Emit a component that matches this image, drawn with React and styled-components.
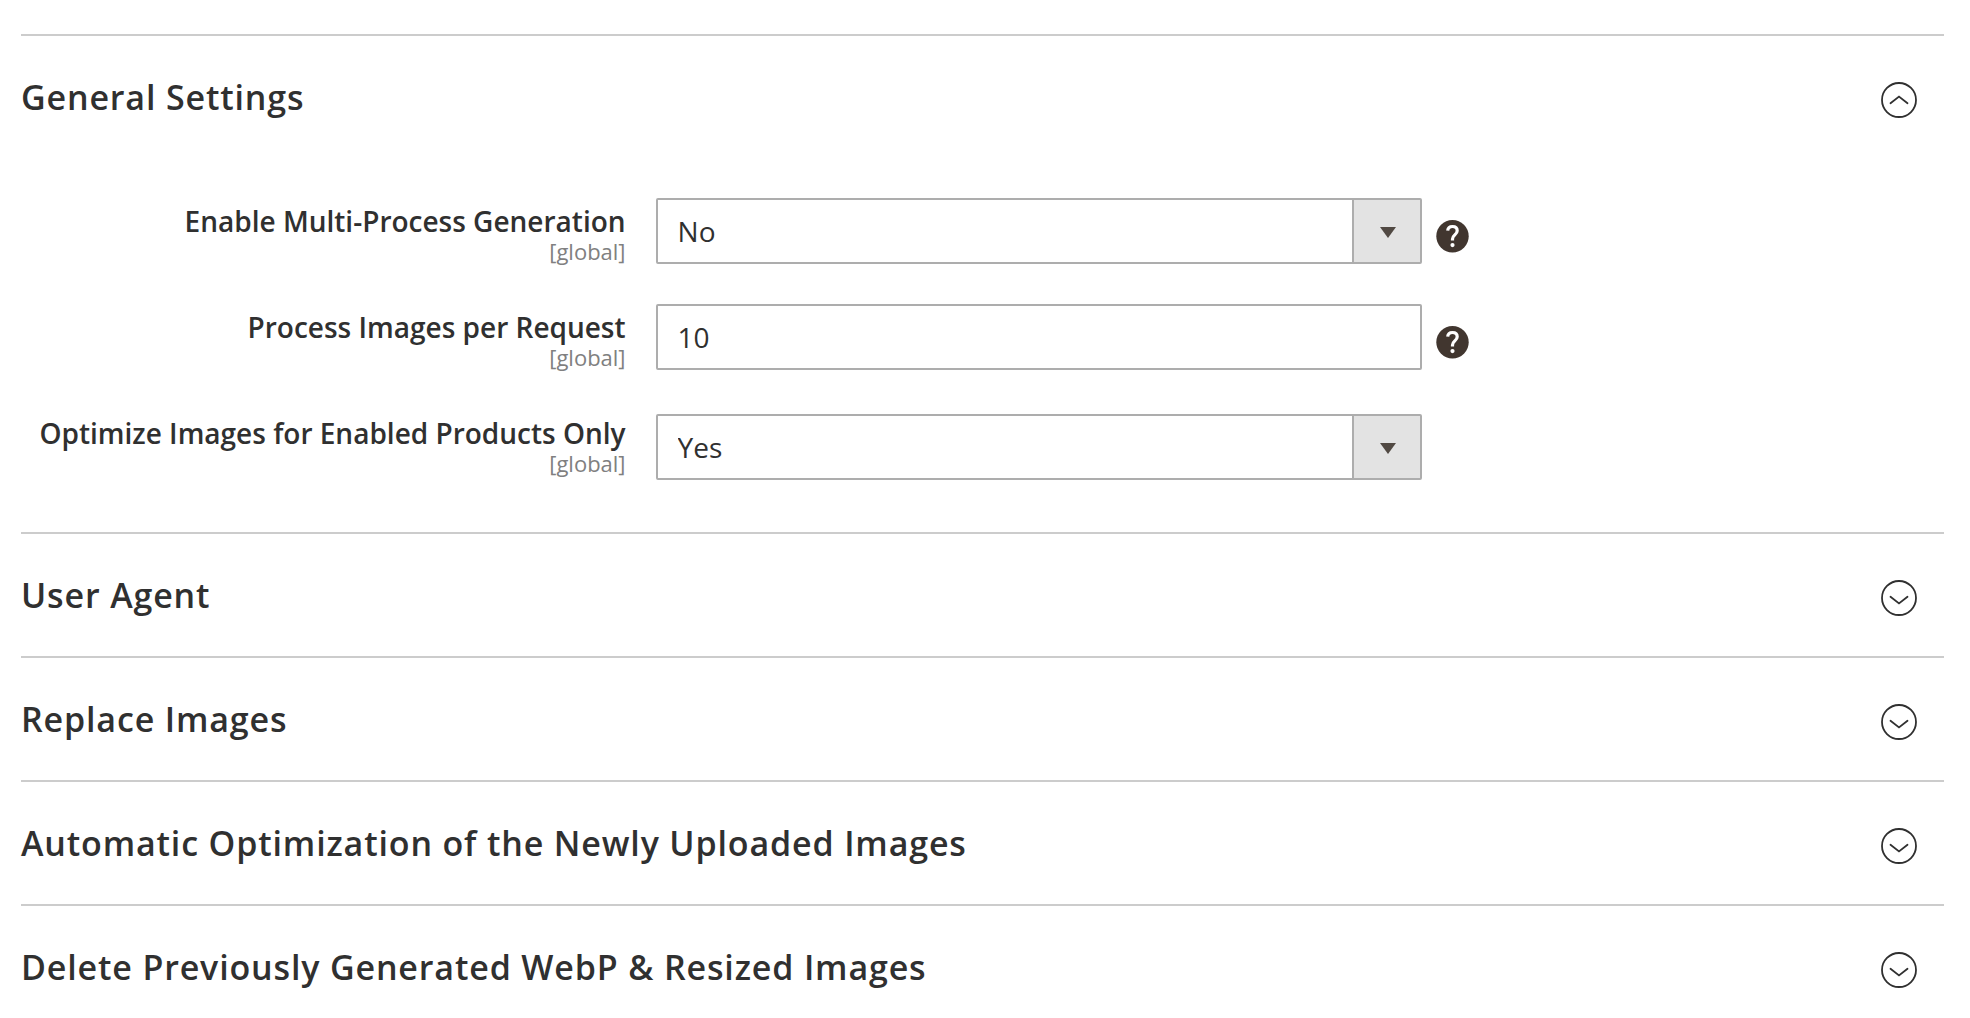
import React, { useState } from 'react'
import styled, { createGlobalStyle } from 'styled-components'

const GlobalStyle = createGlobalStyle`
  * {
    box-sizing: border-box;
  }

  html {
    scrollbar-width: none;
  }

  body {
    margin: 0;
    background: #fff;
    color: #303030;
    font-family: 'Open Sans', 'Noto Sans', sans-serif;
    font-size: 28px;
  }
`

const Page = styled.main`
  padding: 34px 26px 0 21px;
`

const Section = styled.section`
  border-top: 2px solid #ccc;
`

const SectionHeading = styled.h2`
  margin: 0;
  font-size: 34px;
  font-weight: 600;
  line-height: 48px;
`

const SectionToggle = styled.button`
  display: flex;
  align-items: flex-start;
  justify-content: space-between;
  width: 100%;
  height: 122px;
  padding: 37px 27px 0 0;
  border: 0;
  background: none;
  color: inherit;
  font: inherit;
  letter-spacing: 0.025em;
  text-align: left;
  cursor: pointer;

  svg {
    flex: none;
    margin-top: 9px;
  }
`

const SectionBody = styled.div`
  padding: 40px 0 16px;
`

const FieldRow = styled.div`
  display: flex;
  align-items: flex-start;
  height: 106px;
`

const FieldLabel = styled.label`
  width: 33%;
  padding: 7px 30px 0 0;
  font-weight: 600;
  line-height: 32px;
  text-align: right;
  white-space: nowrap;
`

const Scope = styled.span`
  display: block;
  color: #808080;
  font-size: 22px;
  font-weight: 400;
  line-height: 28px;
`

const FieldValue = styled.div`
  display: flex;
  gap: 14px;
  width: 44%;
  padding-top: ${({ $hasHelp }) => ($hasHelp ? '0' : '4px')};
  padding-right: ${({ $hasHelp }) => ($hasHelp ? '33px' : '80px')};
`

const TextInput = styled.input`
  flex: 1;
  min-width: 0;
  height: 66px;
  padding: 0 20px;
  border: 2px solid #adadad;
  border-radius: 2px;
  background: #fff;
  color: #303030;
  font: inherit;
`

const SelectBox = styled.div`
  position: relative;
  display: flex;
  flex: 1;
  min-width: 0;
`

const Select = styled.select`
  width: 100%;
  height: 66px;
  padding: 0 90px 0 20px;
  border: 2px solid #adadad;
  border-radius: 2px;
  background: #fff;
  color: #303030;
  font: inherit;
  appearance: none;
`

// sits over the right end of the native select
const SelectArrow = styled.span`
  position: absolute;
  top: 2px;
  right: 2px;
  bottom: 2px;
  display: flex;
  align-items: center;
  justify-content: center;
  width: 68px;
  padding: 2px 0 0 2px;
  border-left: 2px solid #adadad;
  background: #e3e3e3;
  pointer-events: none;
`

const HelpButton = styled.button`
  flex: none;
  width: 33px;
  height: 33px;
  margin-top: 22px;
  padding: 0;
  border: 0;
  background: none;
  cursor: help;

  svg {
    display: block;
  }
`

function ToggleIcon({ open }) {
  return (
    <svg width='36' height='36' viewBox='0 0 36 36' fill='none' stroke='#303030' strokeWidth='1.8' aria-hidden='true'>
      <circle cx='18' cy='18' r='17' />
      <path d={open ? 'M9.5 21.2 18 14.6l8.5 6.6' : 'M9.5 16.8 18 23.4l8.5-6.6'} strokeLinecap='round' />
    </svg>
  )
}

function HelpIcon() {
  return (
    <svg width='33' height='33' viewBox='0 0 33 33' aria-hidden='true'>
      <circle cx='16.5' cy='16.2' r='16.2' fill='#41362f' />
      <path
        d='M11.7 10.7C11.9 8 13.8 6.5 16.5 6.5c2.8 0 4.700 1.500 4.700 4.200 0 4-4.700 4.300-4.700 8.200v1.600'
        fill='none'
        stroke='#fff'
        strokeWidth='3.2'
      />
      <circle cx='16.5' cy='25.1' r='2.1' fill='#fff' />
    </svg>
  )
}

function Field({ id, label, value, options, help }) {
  return (
    <FieldRow>
      <FieldLabel htmlFor={id}>
        {label}
        <Scope>[global]</Scope>
      </FieldLabel>
      <FieldValue $hasHelp={help}>
        {options ? (
          <SelectBox>
            <Select id={id} defaultValue={value}>
              {options.map(option => <option key={option}>{option}</option>)}
            </Select>
            <SelectArrow>
              <svg width='16' height='11' viewBox='0 0 16 11' aria-hidden='true'>
                <path d='M0 0h16L8 11z' fill='#514943' />
              </svg>
            </SelectArrow>
          </SelectBox>
        ) : (
          <TextInput id={id} type='text' defaultValue={value} />
        )}
        {help && <HelpButton type='button' aria-label={`Help: ${label}`}><HelpIcon /></HelpButton>}
      </FieldValue>
    </FieldRow>
  )
}

function CollapsibleSection({ title, defaultOpen = false, children }) {
  const [open, setOpen] = useState(defaultOpen)

  return (
    <Section>
      <SectionHeading>
        <SectionToggle type='button' aria-expanded={open} onClick={() => setOpen(!open)}>
          {title}
          <ToggleIcon open={open} />
        </SectionToggle>
      </SectionHeading>
      {open && children && <SectionBody>{children}</SectionBody>}
    </Section>
  )
}

const yesNo = ['Yes', 'No']

export default function App() {
  return (
    <>
      <GlobalStyle />
      <Page>
        <CollapsibleSection title='General Settings' defaultOpen>
          <Field id='multi-process' label='Enable Multi-Process Generation' value='No' options={yesNo} help />
          <Field id='images-per-request' label='Process Images per Request' value='10' help />
          <Field id='enabled-only' label='Optimize Images for Enabled Products Only' value='Yes' options={yesNo} />
        </CollapsibleSection>
        <CollapsibleSection title='User Agent' />
        <CollapsibleSection title='Replace Images' />
        <CollapsibleSection title='Automatic Optimization of the Newly Uploaded Images' />
        <CollapsibleSection title='Delete Previously Generated WebP &amp; Resized Images' />
      </Page>
    </>
  )
}
